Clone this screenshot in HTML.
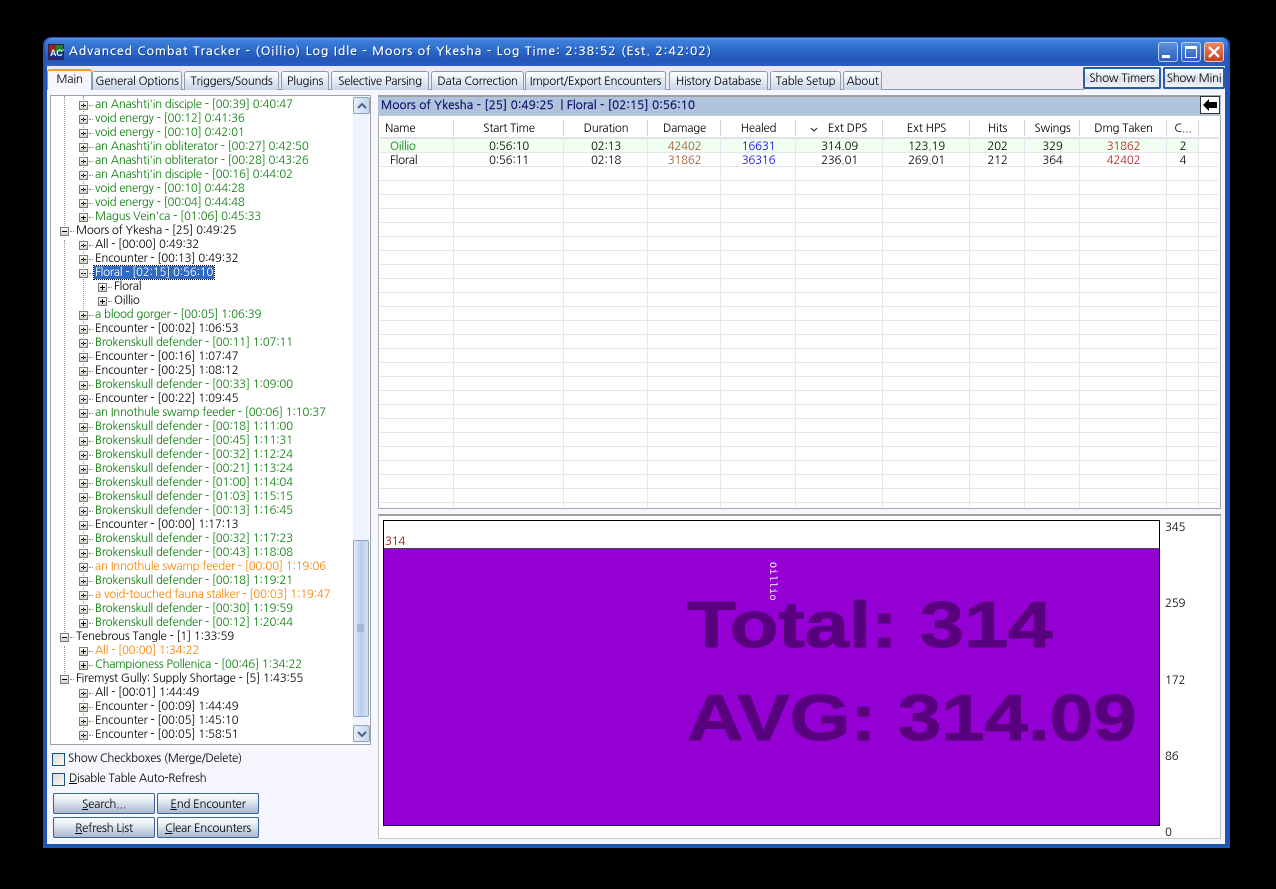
<!DOCTYPE html>
<html><head><meta charset="utf-8"><title>Advanced Combat Tracker</title>
<style>
html,body{margin:0;padding:0;background:#000;width:1276px;height:889px;overflow:hidden}
*{box-sizing:border-box}
body{font:11.5px/14px "NanumGothic","Liberation Sans",sans-serif;letter-spacing:-.25px;color:#000;position:relative;white-space:nowrap}
.a{position:absolute;white-space:nowrap}
#win{left:43px;top:37px;width:1187px;height:811px;background:#1f56b4;border-radius:8px 8px 0 0}
#tb{left:45px;top:38px;width:1183px;height:28px;border-radius:7px 7px 0 0;background:linear-gradient(#5a9ae8 0,#3f80dc 8%,#2d6ccb 40%,#2557b8 75%,#2a5fc2 100%)}
#cl{left:47px;top:66px;width:1178px;height:778px;background:#f6f7fe}
#title{left:69px;top:44px;color:#fff;font-size:12px;line-height:15px;letter-spacing:1.1px;-webkit-text-stroke:.35px #fff;text-shadow:1px 1px 0 #123a90}
#strip{left:47px;top:66px;width:1178px;height:24px;background:#eceaf0}
.tab{position:absolute;top:71px;height:19px;border:1px solid #8b9bb0;border-bottom:0;border-radius:3px 3px 0 0;background:linear-gradient(#fff,#dde6f4 60%,#c5d3e8);text-align:center;line-height:19px}
#tline{left:47px;top:89px;width:1037px;height:1px;background:#7f9db9}
.tb2{position:absolute;top:67px;height:22px;border:2px solid #2a5ca8;border-radius:2px;background:linear-gradient(#fff,#d9e0ec 55%,#f2f4f9);text-align:center;line-height:18px}
#tree{left:50px;top:95px;width:321px;height:650px;background:#fff;border:1px solid #a0a0a0;overflow:hidden}
#rows{position:absolute;left:-51px;top:-96px;width:303px}
#rows div{position:relative;height:14px;white-space:nowrap;top:97px}
.l1{padding-left:76px}.l2{padding-left:95px}.l3{padding-left:114px}
.g{color:#0c7d0c}.o{color:#f98200}
.e{position:absolute;width:9px;height:9px;top:4px;border:1px solid #7a7a7a;background:linear-gradient(#fff,#d6d0c4)}
.e:before{content:"";position:absolute;left:1px;top:3px;width:5px;height:1px;background:#000}
.p:after{content:"";position:absolute;left:3px;top:1px;width:1px;height:5px;background:#000}
.l1 .e{left:60px}.l2 .e{left:79px}.l3 .e{left:98px}
.h{position:absolute;top:8px;width:4px;border-top:1px dotted #888}
.l1 .h{left:70px}.l2 .h{left:89px}.l3 .h{left:108px}
.v{position:absolute;width:1px;border-left:1px dotted #999}
.sb{left:353px;width:16px;background:#eef4fd}
.sbtn{position:absolute;left:353px;width:17px;height:17px;border:1px solid #8ea4c4;border-radius:2px;background:linear-gradient(90deg,#e6eefb,#c3d4ec)}
#thumb{left:353px;top:540px;width:16px;height:177px;border:1px solid #90a6c4;border-radius:2px;background:linear-gradient(90deg,#e3ecfa,#b8cdea 50%,#d4e2f5)}
.cb{position:absolute;left:52px;width:13px;height:13px;border:1px solid #1c5180;background:linear-gradient(135deg,#dcdcd4,#f8f8f4)}
.btn{position:absolute;height:21px;width:102px;border:1px solid #3a6496;border-radius:2px;background:linear-gradient(#fff,#e6ebf3 35%,#a9b9d1);text-align:center;line-height:20px}
u{text-decoration:underline}
#hdr{left:378px;top:95px;width:843px;height:20px;background:#b0c4de;border-top:2px solid #a0a0a0}
#hdrt{left:381px;top:98px;color:#191970;font-size:11.5px;letter-spacing:.17px;-webkit-text-stroke:.4px #191970}
#back{left:1200px;top:96px;width:20px;height:18px;background:#fff;border:1px solid #333}
#panel{left:378px;top:115px;width:843px;height:394px;background:#fff;border:1px solid #a8a8a8;border-top:1px solid #c8c8c8}
#grid{left:379px;top:138px}
#t{position:absolute;left:380px;top:117px;border-collapse:collapse;table-layout:fixed;width:839px}
#t td{padding:0;text-align:center;height:14px;line-height:14px;overflow:hidden;white-space:nowrap}
#t tr.hd td{height:22px;line-height:22px}
#chartp{left:378px;top:514px;width:843px;height:325px;background:#fff;border-top:2px solid #a0a0a0;border-left:1px solid #c0c0c0;border-right:1px solid #c0c0c0;border-bottom:1px solid #ccc}
#ch{left:383px;top:520px;width:777px;height:306px;background:#fff;border:1px solid #000}
#pu{left:384px;top:548px;width:775px;height:277px;background:#9400d3;border-top:1px solid #4a4a4a}
.big{font:bold 65px/65px "Liberation Sans",sans-serif;letter-spacing:0;color:#59007f;transform-origin:0 0;-webkit-text-stroke:1px #59007f}
.yl{position:absolute;left:1165px}
</style></head><body>
<div class="a" id="win"></div>
<div class="a" id="tb"></div>
<div class="a" id="cl"></div>
<svg class="a" style="left:48px;top:44px" width="16" height="16"><rect width="16" height="16" fill="#3a1c3c"/><rect x="1" y="1" width="7" height="7" fill="#a02020"/><rect x="8" y="1" width="7" height="7" fill="#208030"/><rect x="1" y="8" width="14" height="7" fill="#203080"/><text x="2" y="12" font-size="9" font-weight="bold" fill="#cfe" font-family="Liberation Sans">ACT</text></svg>
<div class="a" id="title">Advanced Combat Tracker - (Oillio) Log Idle - Moors of Ykesha - Log Time: 2:38:52 (Est. 2:42:02)</div>
<div class="a" style="left:1158px;top:42px;width:20px;height:20px;border:1px solid #b8d0f0;border-radius:3px;background:linear-gradient(#5c90e0,#2f60c0)"><div class="a" style="left:3px;top:12px;width:8px;height:3px;background:#fff"></div></div>
<div class="a" style="left:1181px;top:42px;width:20px;height:20px;border:1px solid #b8d0f0;border-radius:3px;background:linear-gradient(#5c90e0,#2f60c0)"><div class="a" style="left:3px;top:3px;width:12px;height:12px;border:1px solid #fff;border-top:3px solid #fff"></div></div>
<div class="a" style="left:1204px;top:42px;width:20px;height:20px;border:1px solid #e8c8b8;border-radius:3px;background:linear-gradient(#e88a60,#c84020)"><svg class="a" style="left:3px;top:3px" width="12" height="12"><path d="M1 1L11 11M11 1L1 11" stroke="#fff" stroke-width="2.4"/></svg></div>
<div class="a" id="strip"></div>
<div class="a" id="tline"></div>
<div class="tab" style="left:47px;top:69px;width:45px;height:21px;background:#f6f7fe;border-top:2px solid #e8a030;z-index:2;line-height:17px">Main</div>
<div class="tab" style="left:92px;width:90px">General Options</div>
<div class="tab" style="left:184px;width:95px">Triggers/Sounds</div>
<div class="tab" style="left:281px;width:48px">Plugins</div>
<div class="tab" style="left:331px;width:98px">Selective Parsing</div>
<div class="tab" style="left:431px;width:93px">Data Correction</div>
<div class="tab" style="left:525px;width:141px">Import/Export Encounters</div>
<div class="tab" style="left:669px;width:99px">History Database</div>
<div class="tab" style="left:770px;width:71px">Table Setup</div>
<div class="tab" style="left:843px;width:39px">About</div>
<div class="tb2" style="left:1083px;width:78px">Show Timers</div>
<div class="tb2" style="left:1163px;width:62px">Show Mini</div>

<div class="a" id="tree"><div id="rows">
<div class="l2 g"><i class="e p"></i><i class="h"></i>an Anashti'in disciple - [00:39] 0:40:47</div>
<div class="l2 g"><i class="e p"></i><i class="h"></i>void energy - [00:12] 0:41:36</div>
<div class="l2 g"><i class="e p"></i><i class="h"></i>void energy - [00:10] 0:42:01</div>
<div class="l2 g"><i class="e p"></i><i class="h"></i>an Anashti'in obliterator - [00:27] 0:42:50</div>
<div class="l2 g"><i class="e p"></i><i class="h"></i>an Anashti'in obliterator - [00:28] 0:43:26</div>
<div class="l2 g"><i class="e p"></i><i class="h"></i>an Anashti'in disciple - [00:16] 0:44:02</div>
<div class="l2 g"><i class="e p"></i><i class="h"></i>void energy - [00:10] 0:44:28</div>
<div class="l2 g"><i class="e p"></i><i class="h"></i>void energy - [00:04] 0:44:48</div>
<div class="l2 g"><i class="e p"></i><i class="h"></i>Magus Vein'ca - [01:06] 0:45:33</div>
<div class="l1"><i class="e"></i><i class="h"></i>Moors of Ykesha - [25] 0:49:25</div>
<div class="l2"><i class="e p"></i><i class="h"></i>All - [00:00] 0:49:32</div>
<div class="l2"><i class="e p"></i><i class="h"></i>Encounter - [00:13] 0:49:32</div>
<div class="l2"><i class="e"></i><i class="h"></i><span style="background:#316ac5;color:#fff;outline:1px dotted #000;margin-left:-1px;padding:0 1px;display:inline-block;height:13px;line-height:13px">Floral - [02:15] 0:56:10</span></div>
<div class="l3"><i class="e p"></i><i class="h"></i>Floral</div>
<div class="l3"><i class="e p"></i><i class="h"></i>Oillio</div>
<div class="l2 g"><i class="e p"></i><i class="h"></i>a blood gorger - [00:05] 1:06:39</div>
<div class="l2"><i class="e p"></i><i class="h"></i>Encounter - [00:02] 1:06:53</div>
<div class="l2 g"><i class="e p"></i><i class="h"></i>Brokenskull defender - [00:11] 1:07:11</div>
<div class="l2"><i class="e p"></i><i class="h"></i>Encounter - [00:16] 1:07:47</div>
<div class="l2"><i class="e p"></i><i class="h"></i>Encounter - [00:25] 1:08:12</div>
<div class="l2 g"><i class="e p"></i><i class="h"></i>Brokenskull defender - [00:33] 1:09:00</div>
<div class="l2"><i class="e p"></i><i class="h"></i>Encounter - [00:22] 1:09:45</div>
<div class="l2 g"><i class="e p"></i><i class="h"></i>an Innothule swamp feeder - [00:06] 1:10:37</div>
<div class="l2 g"><i class="e p"></i><i class="h"></i>Brokenskull defender - [00:18] 1:11:00</div>
<div class="l2 g"><i class="e p"></i><i class="h"></i>Brokenskull defender - [00:45] 1:11:31</div>
<div class="l2 g"><i class="e p"></i><i class="h"></i>Brokenskull defender - [00:32] 1:12:24</div>
<div class="l2 g"><i class="e p"></i><i class="h"></i>Brokenskull defender - [00:21] 1:13:24</div>
<div class="l2 g"><i class="e p"></i><i class="h"></i>Brokenskull defender - [01:00] 1:14:04</div>
<div class="l2 g"><i class="e p"></i><i class="h"></i>Brokenskull defender - [01:03] 1:15:15</div>
<div class="l2 g"><i class="e p"></i><i class="h"></i>Brokenskull defender - [00:13] 1:16:45</div>
<div class="l2"><i class="e p"></i><i class="h"></i>Encounter - [00:00] 1:17:13</div>
<div class="l2 g"><i class="e p"></i><i class="h"></i>Brokenskull defender - [00:32] 1:17:23</div>
<div class="l2 g"><i class="e p"></i><i class="h"></i>Brokenskull defender - [00:43] 1:18:08</div>
<div class="l2 o"><i class="e p"></i><i class="h"></i>an Innothule swamp feeder - [00:00] 1:19:06</div>
<div class="l2 g"><i class="e p"></i><i class="h"></i>Brokenskull defender - [00:18] 1:19:21</div>
<div class="l2 o"><i class="e p"></i><i class="h"></i>a void-touched fauna stalker - [00:03] 1:19:47</div>
<div class="l2 g"><i class="e p"></i><i class="h"></i>Brokenskull defender - [00:30] 1:19:59</div>
<div class="l2 g"><i class="e p"></i><i class="h"></i>Brokenskull defender - [00:12] 1:20:44</div>
<div class="l1"><i class="e"></i><i class="h"></i>Tenebrous Tangle - [1] 1:33:59</div>
<div class="l2 o"><i class="e p"></i><i class="h"></i>All - [00:00] 1:34:22</div>
<div class="l2 g"><i class="e p"></i><i class="h"></i>Championess Pollenica - [00:46] 1:34:22</div>
<div class="l1"><i class="e"></i><i class="h"></i>Firemyst Gully: Supply Shortage - [5] 1:43:55</div>
<div class="l2"><i class="e p"></i><i class="h"></i>All - [00:01] 1:44:49</div>
<div class="l2"><i class="e p"></i><i class="h"></i>Encounter - [00:09] 1:44:49</div>
<div class="l2"><i class="e p"></i><i class="h"></i>Encounter - [00:05] 1:45:10</div>
<div class="l2"><i class="e p"></i><i class="h"></i>Encounter - [00:05] 1:58:51</div>
</div></div>
<div class="v" style="left:64px;top:96px;height:130px"></div>
<div class="v" style="left:64px;top:240px;height:392px"></div>
<div class="v" style="left:64px;top:646px;height:28px"></div>
<div class="v" style="left:83px;top:240px;height:378px"></div>
<div class="v" style="left:83px;top:96px;height:120px"></div>
<div class="v" style="left:83px;top:688px;height:54px"></div>
<div class="a sb" style="top:96px;height:647px"></div>
<div class="sbtn" style="top:97px"><svg class="a" style="left:3px;top:4px" width="10" height="8"><path d="M1 6L5 2L9 6" fill="none" stroke="#4d6185" stroke-width="2"/></svg></div>
<div class="a" id="thumb"><svg class="a" style="left:3px;top:83px" width="8" height="9"><path d="M0 1H7M0 3H7M0 5H7M0 7H7" stroke="#8a9cb6"/></svg></div>
<div class="sbtn" style="top:725px"><svg class="a" style="left:3px;top:4px" width="10" height="8"><path d="M1 2L5 6L9 2" fill="none" stroke="#4d6185" stroke-width="2"/></svg></div>

<div class="cb" style="top:753px"></div>
<div class="a" style="left:68px;top:751px">Show Checkboxes (Merge/Delete)</div>
<div class="cb" style="top:773px"></div>
<div class="a" style="left:69px;top:771px"><u>D</u>isable Table Auto-Refresh</div>
<div class="btn" style="left:53px;top:793px"><u>S</u>earch...</div>
<div class="btn" style="left:157px;top:793px"><u>E</u>nd Encounter</div>
<div class="btn" style="left:53px;top:817px"><u>R</u>efresh List</div>
<div class="btn" style="left:157px;top:817px"><u>C</u>lear Encounters</div>

<div class="a" id="panel"></div>
<div class="a" id="hdr"></div>
<div class="a" id="hdrt">Moors of Ykesha - [25] 0:49:25 &nbsp;| Floral - [02:15] 0:56:10</div>
<div class="a" id="back"><svg class="a" style="left:2px;top:2px" width="15" height="12"><path d="M0 6L6 0V3H14V9H6V12Z" fill="#000"/></svg></div>
<div class="a" style="left:380px;top:139px;width:818px;height:13px;background:#f0fff0"></div>
<svg class="a" id="grid" width="841" height="369" style="shape-rendering:crispEdges">
<g stroke="#e6e6ee" fill="none">
<path d="M0 14.5H840M0 28.5H840M0 42.5H840M0 56.5H840M0 70.5H840M0 84.5H840M0 98.5H840M0 112.5H840M0 126.5H840M0 140.5H840M0 154.5H840M0 168.5H840M0 182.5H840M0 196.5H840M0 210.5H840M0 224.5H840M0 238.5H840M0 252.5H840M0 266.5H840M0 280.5H840M0 294.5H840M0 308.5H840M0 322.5H840M0 336.5H840M0 350.5H840M0 364.5H840"/>
<path d="M74.5 0V369M184.5 0V369M268.5 0V369M341.5 0V369M416.5 0V369M503.5 0V369M590.5 0V369M645.5 0V369M700.5 0V369M787.5 0V369M819.5 0V369"/>
</g></svg>
<div class="a" style="left:380px;top:137px;width:839px;height:2px;background:#dfe2ea"></div>
<svg class="a" style="left:379px;top:119px" width="841" height="18"><path d="M74.5 1V17M184.5 1V17M268.5 1V17M341.5 1V17M416.5 1V17M503.5 1V17M590.5 1V17M645.5 1V17M700.5 1V17M787.5 1V17M819.5 1V17" stroke="#d4d4d8"/><path d="M432 9L435 12L438 9" fill="none" stroke="#333" stroke-width="1.2"/></svg>
<table id="t"><colgroup><col style="width:74px"><col style="width:110px"><col style="width:84px"><col style="width:73px"><col style="width:75px"><col style="width:87px"><col style="width:87px"><col style="width:55px"><col style="width:55px"><col style="width:87px"><col style="width:32px"><col style="width:20px"></colgroup>
<tr class="hd"><td style="text-align:left;padding-left:5px">Name</td><td>Start Time</td><td>Duration</td><td>Damage</td><td>Healed</td><td style="padding-left:16px">Ext DPS</td><td>Ext HPS</td><td>Hits</td><td>Swings</td><td>Dmg Taken</td><td>C...</td><td></td></tr>
<tr><td style="text-align:left;padding-left:10px;color:#0c7d0c">Oillio</td><td>0:56:10</td><td>02:13</td><td style="color:#a0522d">42402</td><td style="color:#0000e0">16631</td><td>314.09</td><td>123.19</td><td>202</td><td>329</td><td style="color:#b22222">31862</td><td>2</td><td></td></tr>
<tr><td style="text-align:left;padding-left:10px">Floral</td><td>0:56:11</td><td>02:18</td><td style="color:#a0522d">31862</td><td style="color:#0000e0">36316</td><td>236.01</td><td>269.01</td><td>212</td><td>364</td><td style="color:#b22222">42402</td><td>4</td><td></td></tr>
</table>

<div class="a" id="chartp"></div>
<div class="a" id="ch"></div>
<div class="a" style="left:385px;top:534px;color:#8b0000">314</div>
<div class="a" id="pu"></div>
<div class="a" style="left:765px;top:562px;color:#fff;font:10px/12px 'Liberation Mono',monospace;writing-mode:vertical-rl;letter-spacing:.5px">Oillio</div>
<div class="a big" style="left:687px;top:592px;transform:scaleX(1.224)">Total: 314</div>
<div class="a big" style="left:687px;top:685px;transform:scaleX(1.2)">AVG: 314.09</div>
<div class="yl" style="top:520px">345</div>
<div class="yl" style="top:596px">259</div>
<div class="yl" style="top:673px">172</div>
<div class="yl" style="top:749px">86</div>
<div class="yl" style="top:825px">0</div>
</body></html>
